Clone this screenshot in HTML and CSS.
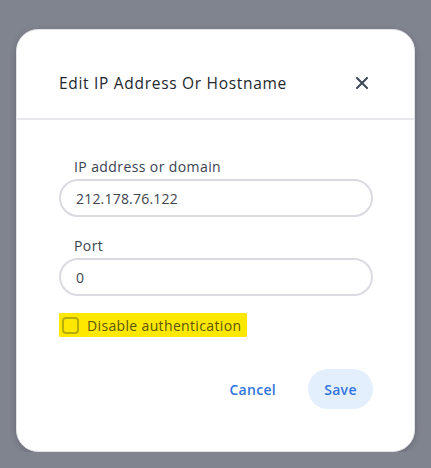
FILE: index.html
```html
<!DOCTYPE html>
<html lang="en">
<head>
  <meta charset="UTF-8">
  <title>Edit IP Address Or Hostname</title>
  <link rel="stylesheet" href="styles.css">
</head>
<body>
  <div class="modal">
    <div class="modal-header">
      <h2 class="modal-title">Edit IP Address Or Hostname</h2>
      <button class="close-btn" aria-label="Close">
        <svg width="12" height="12" viewBox="0 0 12 12">
          <path d="M1 1 L11 11 M11 1 L1 11" stroke="#3d4557" stroke-width="2" stroke-linecap="round"/>
        </svg>
      </button>
    </div>

    <div class="modal-body">
      <label class="field-label" for="host">IP address or domain</label>
      <input class="field-input" type="text" id="host" value="212.178.76.122">

      <label class="field-label port-label" for="port">Port</label>
      <input class="field-input" type="text" id="port" value="0">

      <div class="check-row">
        <span class="check-box"></span>
        <span class="check-text">Disable authentication</span>
      </div>

      <div class="actions">
        <button class="btn btn-cancel">Cancel</button>
        <button class="btn btn-save">Save</button>
      </div>
    </div>
  </div>
</body>
</html>
```

FILE: styles.css
```css
* {
  box-sizing: border-box;
}

body {
  margin: 0;
  padding: 29px 0 0 16px;
  background: #80848f;
  font-family: 'Open Sans', sans-serif;
  color: #333;
}

.modal {
  width: 399px;
  height: 423px;
  background: #fff;
  border-radius: 22px;
  box-shadow: 0 2px 6px rgba(0, 0, 0, 0.2);
  border: 1px solid #e2e3e7;
}

.modal-header {
  display: flex;
  align-items: center;
  justify-content: space-between;
  padding: 43px 46px 25px 42px;
  border-bottom: 2px solid #e8e8ec;
}

.modal-title {
  margin: 0;
  font-size: 15.5px;
  font-weight: 500;
  line-height: 20px;
  color: #22272e;
  letter-spacing: 0.7px;
}

.close-btn {
  border: none;
  background: none;
  padding: 0;
  width: 12px;
  height: 12px;
  display: flex;
  cursor: pointer;
}

.modal-body {
  display: flex;
  flex-direction: column;
  padding: 37px 41px 0 42px;
}

.field-label {
  display: block;
  padding-left: 15px;
  font-size: 14px;
  line-height: 20px;
  font-weight: 500;
  color: #3a4252;
  letter-spacing: 0.4px;
  margin-bottom: 2px;
}

.port-label {
  margin-top: 19px;
}

.field-input {
  width: 100%;
  height: 38px;
  border: 2px solid #dadbe0;
  border-radius: 19px;
  padding: 0 15px;
  font-family: 'Open Sans', sans-serif;
  font-size: 14px;
  color: #3e4450;
  letter-spacing: 0.2px;
  outline: none;
}

.check-row {
  display: flex;
  align-items: center;
  gap: 8px;
  align-self: flex-start;
  margin-top: 17px;
  height: 24px;
  padding: 0 6px 0 3px;
  background: #ffe800;
  border-radius: 1px;
}

.check-box {
  width: 17px;
  height: 17px;
  border: 2px solid #b9ad0c;
  border-radius: 4px;
}

.check-text {
  font-size: 14px;
  color: #5c5606;
  letter-spacing: 0.35px;
}

.actions {
  display: flex;
  justify-content: flex-end;
  align-items: center;
  gap: 16px;
  margin-top: 32px;
}

.btn {
  height: 40px;
  border: none;
  border-radius: 20px;
  font-family: 'Open Sans', sans-serif;
  font-size: 14px;
  font-weight: 600;
  color: #3274de;
  background: none;
  padding: 0 16px;
  letter-spacing: 0.3px;
  cursor: pointer;
}

.btn-save {
  width: 65px;
  padding: 0;
  background: #e3effc;
}
```
